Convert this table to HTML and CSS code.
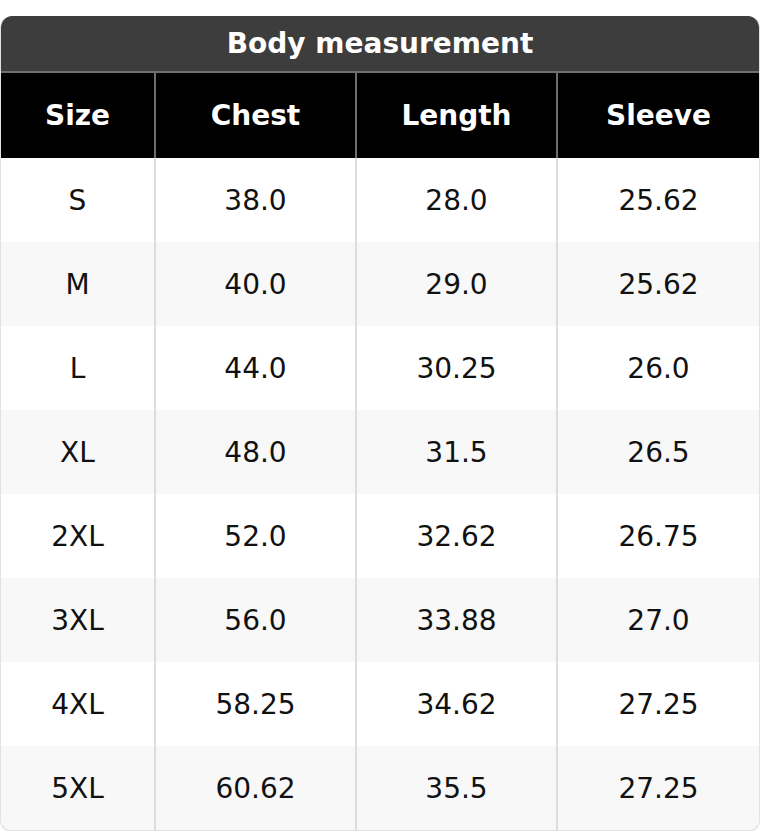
FILE: index.html
```html
<!DOCTYPE html>
<html>
<head>
<meta charset="utf-8">
<link rel="stylesheet" href="styles.css">
</head>
<body>
<div class="card">
  <div class="title">Body measurement</div>
  <table class="chart">
    <thead>
      <tr><th>Size</th><th>Chest</th><th>Length</th><th>Sleeve</th></tr>
    </thead>
    <tbody>
      <tr><td>S</td><td>38.0</td><td>28.0</td><td>25.62</td></tr>
      <tr><td>M</td><td>40.0</td><td>29.0</td><td>25.62</td></tr>
      <tr><td>L</td><td>44.0</td><td>30.25</td><td>26.0</td></tr>
      <tr><td>XL</td><td>48.0</td><td>31.5</td><td>26.5</td></tr>
      <tr><td>2XL</td><td>52.0</td><td>32.62</td><td>26.75</td></tr>
      <tr><td>3XL</td><td>56.0</td><td>33.88</td><td>27.0</td></tr>
      <tr><td>4XL</td><td>58.25</td><td>34.62</td><td>27.25</td></tr>
      <tr><td>5XL</td><td>60.62</td><td>35.5</td><td>27.25</td></tr>
    </tbody>
  </table>
</div>
</body>
</html>
```
FILE: styles.css
```css
html, body {
  margin: 0;
  padding: 0;
  background: #ffffff;
}
body {
  padding-top: 16px;
  font-family: "DejaVu Sans", sans-serif;
}
.card {
  width: 760px;
  box-sizing: border-box;
  border-radius: 12px;
  overflow: hidden;
  border: 1px solid #e2e2e2;
  border-top: none;
  box-shadow: 0 1px 2px rgba(0,0,0,0.12);
}
.title {
  height: 55px;
  background: #3d3d3d;
  color: #ffffff;
  font-weight: bold;
  font-size: 28px;
  display: flex;
  align-items: center;
  justify-content: center;
  border-bottom: 2px solid #6e6e6e;
}
.chart {
  width: 100%;
  border-collapse: collapse;
  table-layout: fixed;
}
.chart th, .chart td {
  text-align: center;
  padding: 0;
  font-size: 28px;
}
.chart th {
  height: 85px;
  background: #000000;
  color: #ffffff;
  font-weight: bold;
  border-right: 2px solid #6e6e6e;
}
.chart td {
  height: 84px;
  color: #111111;
  border-right: 2px solid #dddddd;
}
.chart th:last-child, .chart td:last-child {
  border-right: none;
}
.chart th:nth-child(1) { width: 153px; }
.chart th:nth-child(2) { width: 199px; }
.chart th:nth-child(3) { width: 199px; }
.chart tbody tr:nth-child(even) td {
  background: #f8f8f8;
}
```
